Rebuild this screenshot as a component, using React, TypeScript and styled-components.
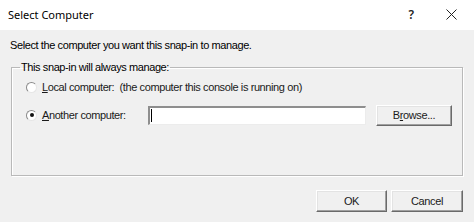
import React from "react";
import styled, { createGlobalStyle } from "styled-components";

const GlobalStyle = createGlobalStyle`
    html, body {
        margin: 0;
        padding: 0;
        background: #f0f0f0;
    }
    body {
        font-family: "Liberation Sans", Arial, sans-serif;
        font-size: 11px;
        letter-spacing: -0.4px;
        color: #000;
    }
`;

const Window = styled.div`
    width: 474px;
    height: 222px;
    display: flex;
    flex-direction: column;
    background: #f0f0f0;
    overflow: hidden;
`;

const TitleBar = styled.div`
    height: 30px;
    flex: none;
    display: flex;
    align-items: center;
    background: #ffffff;
    padding-left: 8px;
`;

const Title = styled.div`
    flex: 1;
    font-family: "Noto Sans", "Open Sans", sans-serif;
    font-size: 11px;
    letter-spacing: 0;
    color: #000;
    padding-bottom: 1px;
`;

const CaptionButton = styled.div<{ $w: number }>`
    width: ${(p) => p.$w}px;
    height: 30px;
    flex: none;
    display: flex;
    align-items: center;
    justify-content: center;
    font-family: "Noto Sans", sans-serif;
    font-size: 12px;
    font-weight: 600;
    color: #222;
    padding-bottom: 2px;
`;

const Body = styled.div`
    flex: 1;
    display: flex;
    flex-direction: column;
    padding: 9px 11px 0 11px;
`;

const Prompt = styled.div`
    line-height: 13px;
    margin-left: -1px;
`;

const Group = styled.fieldset`
    margin: 9px 0 0 0;
    padding: 3px 0 0 0;
    height: 115px;
    box-sizing: border-box;
    border: 1px solid #b9b9b9;
    box-shadow: inset 1px 1px 0 #ffffff, 1px 1px 0 #ffffff;
    display: flex;
    flex-direction: column;
    gap: 8px;
`;

const Legend = styled.legend`
    padding: 0 1px;
    margin-left: 8px;
    line-height: 13px;
`;

const Row = styled.div`
    height: 20px;
    display: flex;
    align-items: center;
    padding-left: 13px;
`;

const Radio = styled.span<{ $checked?: boolean }>`
    width: 11px;
    height: 11px;
    flex: none;
    box-sizing: border-box;
    border-radius: 50%;
    border: 1px solid;
    border-color: #8a8a8a #e6e6e6 #e6e6e6 #8a8a8a;
    background: #ffffff;
    display: flex;
    align-items: center;
    justify-content: center;
    margin-left: 1px;
    margin-right: 5px;
    &::after {
        content: "";
        width: 4px;
        height: 4px;
        border-radius: 50%;
        background: ${(p) => (p.$checked ? "#111" : "transparent")};
    }
`;

const Label = styled.span<{ $w?: number }>`
    width: ${(p) => (p.$w ? `${p.$w}px` : "auto")};
    flex: none;
    white-space: pre;
    color: #1a1a1a;
`;

const Key = styled.span`
    text-decoration: underline;
`;

const TextBox = styled.div`
    width: 218px;
    height: 19px;
    flex: none;
    box-sizing: border-box;
    background: #ffffff;
    border-top: 2px solid #8e8e8e;
    border-left: 2px solid #8e8e8e;
    border-bottom: 1px solid #ececec;
    border-right: 1px solid #ececec;
    display: flex;
    align-items: center;
    padding-left: 1px;
`;

const Caret = styled.span`
    width: 1px;
    height: 13px;
    background: #000;
`;

const Button = styled.button<{ $w: number; $h: number }>`
    width: ${(p) => p.$w}px;
    height: ${(p) => p.$h}px;
    flex: none;
    margin: 0;
    padding: 0;
    box-sizing: border-box;
    font-family: "Liberation Sans", Arial, sans-serif;
    font-size: 11px;
    letter-spacing: -0.4px;
    color: #1a1a1a;
    background: #f0f0f0;
    border: 1px solid;
    border-color: #ffffff #6a6a6a #6a6a6a #ffffff;
    box-shadow: inset -1px -1px 0 #a0a0a0, inset 1px 1px 0 #e3e3e3;
`;

const Spacer = styled.div<{ $w: number }>`
    width: ${(p) => p.$w}px;
    flex: none;
`;

const Footer = styled.div`
    display: flex;
    justify-content: flex-end;
    gap: 4px;
    margin-top: 14px;
`;

const CloseIcon = () => (
    <svg width="11" height="11" viewBox="0 0 11 11">
        <path d="M0.5 0.5 L10.5 10.5 M10.5 0.5 L0.5 10.5" stroke="#222" strokeWidth="1" fill="none" />
    </svg>
);

export default function App() {
    return (
        <>
            <GlobalStyle />
            <Window>
                <TitleBar>
                    <Title>Select Computer</Title>
                    <CaptionButton $w={34}>?</CaptionButton>
                    <CaptionButton $w={46}>
                        <CloseIcon />
                    </CaptionButton>
                </TitleBar>
                <Body>
                    <Prompt>Select the computer you want this snap-in to manage.</Prompt>
                    <Group>
                        <Legend>This snap-in will always manage:</Legend>
                        <Row>
                            <Radio />
                            <Label>
                                <Key>L</Key>ocal computer:  (the computer this console is running on)
                            </Label>
                        </Row>
                        <Row>
                            <Radio $checked />
                            <Label $w={106}>
                                <Key>A</Key>nother computer:
                            </Label>
                            <TextBox>
                                <Caret />
                            </TextBox>
                            <Spacer $w={10} />
                            <Button $w={76} $h={21}>
                                B<Key>r</Key>owse...
                            </Button>
                        </Row>
                    </Group>
                    <Footer>
                        <Button $w={71} $h={22}>OK</Button>
                        <Button $w={72} $h={22}>Cancel</Button>
                    </Footer>
                </Body>
            </Window>
        </>
    );
}
